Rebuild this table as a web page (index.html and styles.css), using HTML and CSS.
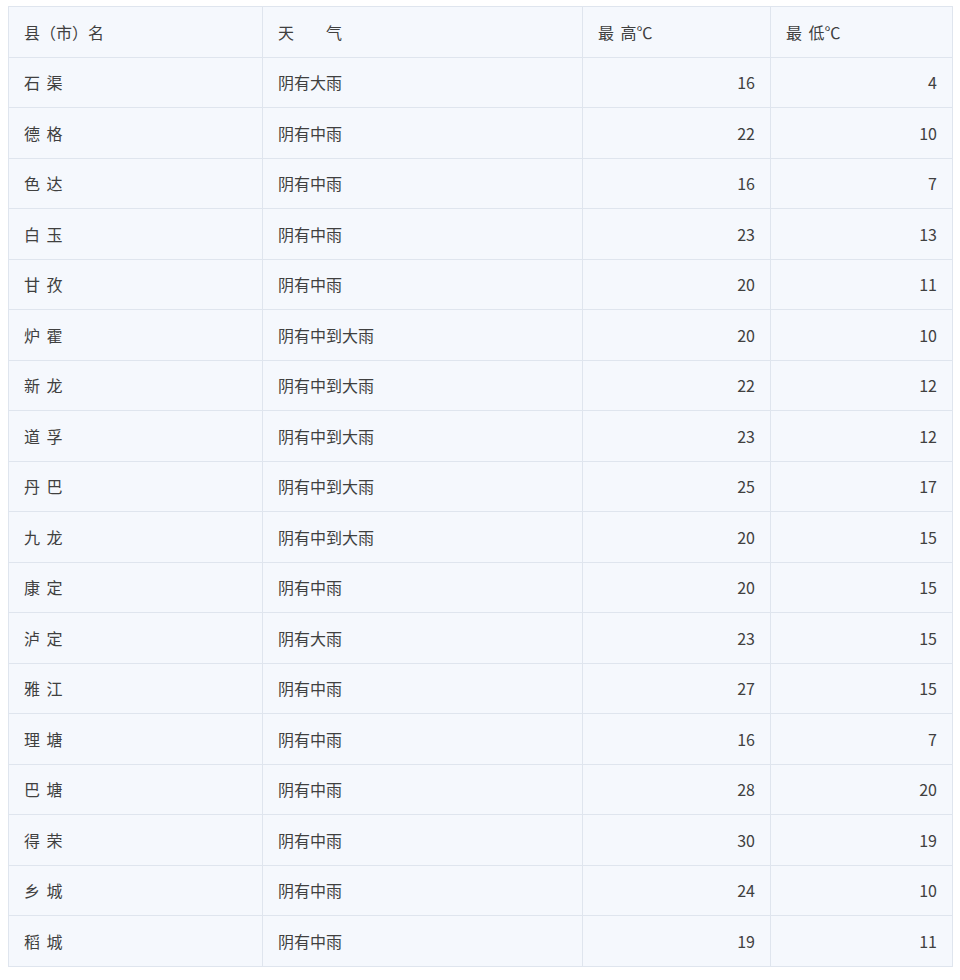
FILE: index.html
```html
<!DOCTYPE html>
<html lang="zh">
<head>
<meta charset="utf-8">
<link rel="stylesheet" href="styles.css">
</head>
<body>
<table class="weather">
  <colgroup>
    <col class="c-name"><col class="c-wx"><col class="c-hi"><col class="c-lo">
  </colgroup>
  <thead>
    <tr><th>县（市）名</th><th>天　　气</th><th>最 高℃</th><th>最 低℃</th></tr>
  </thead>
  <tbody>
    <tr><td>石 渠</td><td>阴有大雨</td><td class="num">16</td><td class="num">4</td></tr>
    <tr><td>德 格</td><td>阴有中雨</td><td class="num">22</td><td class="num">10</td></tr>
    <tr><td>色 达</td><td>阴有中雨</td><td class="num">16</td><td class="num">7</td></tr>
    <tr><td>白 玉</td><td>阴有中雨</td><td class="num">23</td><td class="num">13</td></tr>
    <tr><td>甘 孜</td><td>阴有中雨</td><td class="num">20</td><td class="num">11</td></tr>
    <tr><td>炉 霍</td><td>阴有中到大雨</td><td class="num">20</td><td class="num">10</td></tr>
    <tr><td>新 龙</td><td>阴有中到大雨</td><td class="num">22</td><td class="num">12</td></tr>
    <tr><td>道 孚</td><td>阴有中到大雨</td><td class="num">23</td><td class="num">12</td></tr>
    <tr><td>丹 巴</td><td>阴有中到大雨</td><td class="num">25</td><td class="num">17</td></tr>
    <tr><td>九 龙</td><td>阴有中到大雨</td><td class="num">20</td><td class="num">15</td></tr>
    <tr><td>康 定</td><td>阴有中雨</td><td class="num">20</td><td class="num">15</td></tr>
    <tr><td>泸 定</td><td>阴有大雨</td><td class="num">23</td><td class="num">15</td></tr>
    <tr><td>雅 江</td><td>阴有中雨</td><td class="num">27</td><td class="num">15</td></tr>
    <tr><td>理 塘</td><td>阴有中雨</td><td class="num">16</td><td class="num">7</td></tr>
    <tr><td>巴 塘</td><td>阴有中雨</td><td class="num">28</td><td class="num">20</td></tr>
    <tr><td>得 荣</td><td>阴有中雨</td><td class="num">30</td><td class="num">19</td></tr>
    <tr><td>乡 城</td><td>阴有中雨</td><td class="num">24</td><td class="num">10</td></tr>
    <tr><td>稻 城</td><td>阴有中雨</td><td class="num">19</td><td class="num">11</td></tr>
  </tbody>
</table>
</body>
</html>
```
FILE: styles.css
```css
html, body {
  margin: 0;
  padding: 0;
  background: #ffffff;
}
body {
  padding: 6px 8px 0 8px;
  font-family: "Noto Sans CJK SC", "Noto Sans", sans-serif;
  color: #404040;
}
.weather {
  width: 944px;
  border-collapse: collapse;
  table-layout: fixed;
  background: #f5f8fd;
  font-size: 16px;
  word-spacing: 3px;
}
.c-name { width: 254px; }
.c-wx { width: 320px; }
.c-hi { width: 188px; }
.c-lo { width: 182px; }
.weather th,
.weather td {
  border: 1px solid #dfe5ee;
  height: 50.5px;
  padding: 0 15px;
  text-align: left;
  font-weight: normal;
  vertical-align: middle;
  box-sizing: border-box;
  line-height: 20px;
}
.weather td.num {
  text-align: right;
}
```
